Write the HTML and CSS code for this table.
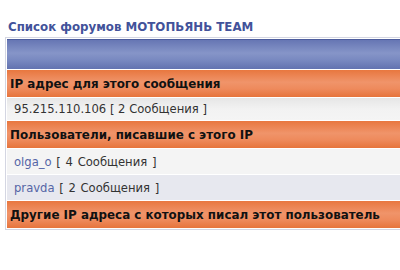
FILE: index.html
```html
<!DOCTYPE html>
<html lang="ru">
<head>
    <meta charset="UTF-8">
    <title>Список форумов МОТОПЬЯНЬ TEAM</title>
    <link rel="stylesheet" href="styles.css">
</head>
<body>

<div class="nav">
    <a href="#" class="nav-link">Список форумов МОТОПЬЯНЬ TEAM</a>
</div>

<table class="forumline">
    <tr>
        <th class="thead">&nbsp;</th>
    </tr>
    <tr>
        <td class="cat">IP адрес для этого сообщения</td>
    </tr>
    <tr>
        <td class="row row-ip">95.215.110.106 [ 2 Сообщения ]</td>
    </tr>
    <tr>
        <td class="cat">Пользователи, писавшие с этого IP</td>
    </tr>
    <tr>
        <td class="row row1"><a href="#" class="user">olga_o</a> [ 4 Сообщения ]</td>
    </tr>
    <tr>
        <td class="row row2"><a href="#" class="user">pravda</a> [ 2 Сообщения ]</td>
    </tr>
    <tr>
        <td class="cat">Другие IP адреса с которых писал этот пользователь</td>
    </tr>
</table>

</body>
</html>
```

FILE: styles.css
```css
body {
    font-family: "DejaVu Sans", Verdana, sans-serif;
    font-size: 11px;
    background-color: #fff;
    color: #333;
    margin: 0;
    padding: 0;
    overflow: hidden;
}
a {
    text-decoration: none;
}
.nav {
    padding: 20px 0 0 8px;
    height: 17px;
}
.nav-link {
    font-weight: bold;
    font-size: 11.8px;
    color: #42529a;
}
.forumline {
    width: 420px;
    margin: 0 0 0 5px;
    border: 1px solid #d4d6e2;
    border-spacing: 1px;
    background-color: #fff;
}
.forumline td, .forumline th {
    padding: 0 0 0 3px;
    text-align: left;
}
.thead {
    height: 29px;
    background: linear-gradient(#6676b4, #8695c8 45%, #7888c0 70%, #6272b0);
    border-top: 1px solid #4d5d9d;
}
.cat {
    height: 27px;
    font-size: 11.9px;
    font-weight: bold;
    color: #111;
    background: linear-gradient(#e8773f, #f0946a 45%, #ee8a5c 70%, #e6743c);
}
.forumline .row {
    height: 22px;
    padding-left: 7px;
    font-size: 11.6px;
}
.row-ip {
    background: linear-gradient(#e6e6e6, #f2f2f2 50%, #f4f4f4);
}
.forumline .row1,
.forumline .row2 {
    height: 25px;
    word-spacing: 1px;
}
.row1 {
    background-color: #f4f4f4;
}
.row2 {
    background-color: #e7e8ef;
}
.user {
    color: #5565a6;
}
```
